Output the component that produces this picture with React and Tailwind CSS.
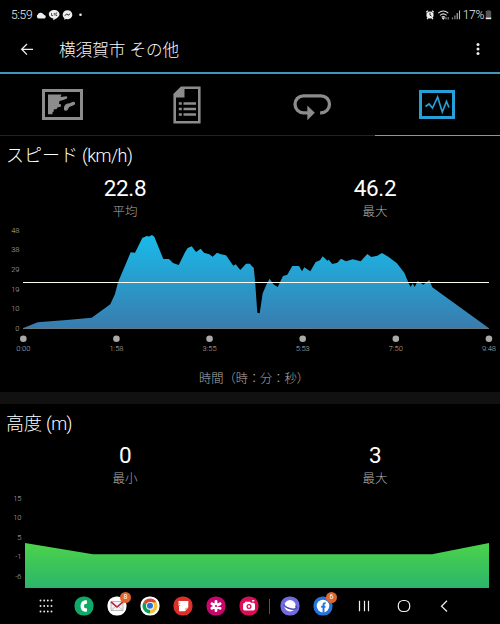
import React from 'react';

const speedPoints = [
  [23.3, 106], [37.7, 100.3], [66.7, 98], [91.7, 95.7], [110.3, 82.3], [115, 72], [118, 60.3],
  [130.7, 30.3], [135, 30.7], [142.3, 16], [146.7, 14], [149, 14.5], [152, 13], [154.3, 14.7],
  [163.3, 37], [169, 37], [173, 41], [178.7, 43], [185, 30.3], [187.7, 26], [191.7, 24.3],
  [196, 30], [200.7, 26.7], [204, 30.7], [209.3, 32.3], [212.7, 34.7], [217, 30.7], [221, 32.3],
  [226, 33.3], [233.3, 43.7], [235.7, 42.3], [240.3, 48], [246, 41.7], [250, 41.7], [251.7, 44],
  [253.7, 45.7], [255, 58], [257.3, 90.7], [259.7, 91.3], [262.7, 71.3], [266.7, 62],
  [269.7, 56.7], [273.3, 62.3], [277.7, 65], [283, 54], [287.3, 52.7], [292.3, 44], [299, 44],
  [302, 49.3], [304.3, 45.3], [310.3, 49.3], [315.7, 40], [320, 38.3], [322.7, 34.3],
  [327.3, 38.7], [328.7, 37.7], [332.3, 42], [337.3, 40.7], [341, 36.7], [346, 39.3],
  [352.7, 37.3], [360.7, 39.3], [367.3, 32], [371.3, 35], [377.3, 33.7], [382, 31],
  [388.3, 34.7], [396.7, 41], [404.3, 50.7], [408.7, 61.3], [410.7, 65], [412.7, 61.3],
  [414.7, 65], [417.7, 59], [423.3, 62.7], [429.3, 58], [432.3, 65.3], [488.7, 106],
];

const timeTicks = ['0:00', '1:58', '3:55', '5:53', '7:50', '9:48'];
const speedTicks = ['48', '38', '29', '19', '10', '0'];
const altitudeTicks = ['15', '10', '5', '-1', '-6'];

const StatusBar = () => (
  <div className="flex h-[30px] items-center justify-between pl-[11px] pr-[8px] text-[12px] font-light leading-none text-[#f0f0f0]">
    <div className="flex items-center">
      <span className="w-[25px] tracking-[-0.3px]">5:59</span>
      <svg className="h-3 w-[50px]" viewBox="0 0 50 12">
        <path d="M3 9.5a2.2 2.2 0 0 1-1.2-4A3.2 3.2 0 0 1 7 4.8l1.3 1.1A1.9 1.9 0 0 1 8.6 9.5z" fill="#eee" />
        <path d="M18.2 1c-3 0-5.4 1.9-5.4 4.3 0 2.2 2 3.9 4.5 4.2v1.7c2.5-1.2 6.2-3.4 6.2-5.9C23.5 2.9 21.2 1 18.2 1z" fill="#eee" />
        <path d="M15.5 4v2.5h1.5M18.3 4v2.5M21.2 4h-1.3v2.5h1.3" stroke="#333" strokeWidth=".8" fill="none" />
        <path d="M31.5 1.2c-2.8 0-4.8 2-4.8 4.5 0 1.4.6 2.6 1.6 3.4v1.7l1.7-.8c3.4.8 6.3-1.4 6.3-4.3 0-2.5-2-4.5-4.800-4.500z" fill="#eee" />
        <path d="m28.8 6.8 1.9-1.9 1.5 1.3 2-1.5" stroke="#222" strokeWidth="1" fill="none" />
        <circle cx="44.5" cy="5.7" r="1.3" fill="#eee" />
      </svg>
    </div>
    <div className="flex items-center">
      <svg className="mr-[2px] h-3 w-[36px]" viewBox="0 0 36 12">
        <circle cx="5" cy="6" r="3.6" fill="#eee" />
        <path d="M1.3 3.200 3 1.600M8.700 3.200 7 1.600M2 10.200l1.200-1.200M8 10.200 6.800 9" stroke="#eee" strokeWidth="1.2" />
        <path d="M5 3.7v2.5l1.5.8" stroke="#111" strokeWidth=".9" fill="none" />
        <g stroke="#ddd" strokeWidth="1.1" fill="none">
          <path d="M13.3 4.2c3-2.700 7-2.700 10 0M15 6.300c2-1.700 4.600-1.700 6.600 0M16.700 8.200c1-.8 2.200-.8 3.200 0" />
        </g>
        <path d="m18.3 10.500-1.200-1.600h2.400zM21 10.500V8M23.200 8v2.500" stroke="#ddd" strokeWidth=".7" fill="#ddd" />
        <path d="M27.5 10.3V8.5M29.9 10.3V6.5" stroke="#999" strokeWidth="1.1" />
        <path d="M32.2 10.3V4M34.5 10.3V1.5" stroke="#bbb" strokeWidth="1.1" />
      </svg>
      <span className="tracking-[-0.3px]">17%</span>
      <svg className="ml-px h-3 w-[7px]" viewBox="0 0 7 12">
        <path d="M2.2 1.3h2.600v.8h1.400v7.600H.8V2.100h1.400z" fill="#555" />
        <path d="M.8 8.600h5.400v1.600H.8z" fill="#eee" />
      </svg>
    </div>
  </div>
);

const Header = () => (
  <header className="flex h-[44px] items-center border-b-2 border-[#4295bb] pl-[20px] pr-[19px]">
    <svg className="mt-[-5px] h-[14px] w-[14px]" viewBox="0 0 14 14" fill="none" stroke="#eee" strokeWidth="1.3">
      <path d="M13 7.300H1.800M7 2 1.700 7.300 7 12.600" />
    </svg>
    <h1 className="ml-[25px] flex-1 whitespace-nowrap text-[16.6px] font-light leading-none text-[#fafafa]">横須賀市 その他</h1>
    <svg className="mt-[-4px] h-[14px] w-[6px]" viewBox="0 0 6 14" fill="#eee">
      <circle cx="3" cy="2.5" r="1.5" />
      <circle cx="3" cy="7" r="1.5" />
      <circle cx="3" cy="11.5" r="1.5" />
    </svg>
  </header>
);

const Tabs = () => (
  <nav className="grid h-[62px] grid-cols-4">
    <div className="flex items-center justify-center border-b border-[#242424]">
      <svg className="h-[31px] w-[41px]" viewBox="0 0 41 31">
        <path d="M1.5 1.5h38v28h-38z" fill="none" stroke="#8c8c8c" strokeWidth="3" />
        <path d="M6 5.500h13.500l-1 2.500 6-.7c1 .3 1 2.200 0 2.500l-4 1.500-3 .8-.5 2.700 2 .8v2l-3.500 1-1 1.600h-2.500l-.5 2.600-1 .5v2H6z" fill="#8c8c8c" />
        <path d="M22 18c1.300-3 2.500-3.300 5.500-3.700l3.500-1.500c2-.3 3 2 1.200 3.200l-5 2-1.700 3c-1 1.300-3.200.9-3.500-.5z" fill="#8c8c8c" />
      </svg>
    </div>
    <div className="flex items-center justify-center border-b border-[#242424] pr-px">
      <svg className="h-[38px] w-[28px]" viewBox="0 0 28 38">
        <path d="M8.5 1.700h17.800v34.600H1.700V8.500z" fill="none" stroke="#8c8c8c" strokeWidth="2.6" />
        <path d="M8 1h3.500v10.500H1V8z" fill="#8c8c8c" />
        <path d="M10.5 17.500H23M10.500 23H23M10.500 28.500H23" stroke="#8c8c8c" strokeWidth="2.5" />
        <path d="M5.8 17.500h3M5.800 23h3M5.800 28.500h3" stroke="#8c8c8c" strokeWidth="2.5" />
      </svg>
    </div>
    <div className="flex items-center justify-center border-b border-[#242424] pr-px">
      <svg className="mt-[5px] h-[28px] w-[40px]" viewBox="0 0 40 28">
        <path d="M16 19.800H11.500A8.500 8.500 0 0 1 11.500 2.800H29a8.500 8.500 0 0 1 0 17h-.9" fill="none" stroke="#8c8c8c" strokeWidth="3.3" />
        <path d="m15.300 12.500 7.500 7.300-7.500 7.400z" fill="#8c8c8c" />
      </svg>
    </div>
    <div className="flex items-center justify-center border-b border-[#7896d2] pr-[2px]">
      <svg className="h-[29px] w-[36px]" viewBox="0 0 36 29">
        <path d="M1.500 1.500h33v26h-33z" fill="none" stroke="#25a0d8" strokeWidth="3" />
        <path d="m6.500 16.500 3.500-2.500 3.500 4L18.600 7l4.700 15 4.200-10.500 2.500 6" fill="none" stroke="#25a0d8" strokeWidth="1.700" />
      </svg>
    </div>
  </nav>
);

const Stat = ({ value, label }) => (
  <div className="flex flex-col items-center">
    <span className="text-[22.5px] leading-[26px] tracking-[-0.4px] text-white">{value}</span>
    <span className="mt-px text-[12.5px] font-light leading-[20px] text-[#acacac]">{label}</span>
  </div>
);

const SpeedChart = () => {
  const points = speedPoints.map((p) => p.join(',')).join(' ');

  return (
    <svg className="block h-[140px] w-[500px] font-light" viewBox="0 0 500 140" fontSize="7.5">
      <defs>
        <linearGradient id="speedFill" gradientUnits="userSpaceOnUse" x1="0" y1="13" x2="0" y2="106">
          <stop offset="0%" stopColor="#18bbea" />
          <stop offset="100%" stopColor="#397cae" />
        </linearGradient>
      </defs>
      {speedTicks.map((tick, i) => (
        <text key={tick} x="19.5" y={10.7 + i * 19.65} textAnchor="end" fill="#b8b8b8">{tick}</text>
      ))}
      <polygon points={points} fill="url(#speedFill)" />
      <rect x="23" y="106" width="466" height="1" fill="#69777f" />
      <rect x="23" y="60" width="466" height="1" fill="#fffff0" />
      {timeTicks.map((tick, i) => (
        <g key={tick}>
          <circle cx={23.3 + i * 93.13} cy="116.7" r="3.3" fill="#a9a9a9" />
          <text x={23.3 + i * 93.13} y="129" textAnchor="middle" fill="#b8b8b8">{tick}</text>
        </g>
      ))}
    </svg>
  );
};

const AltitudeChart = () => (
  <svg className="block h-[98px] w-[500px] font-light" viewBox="0 0 500 98" fontSize="7.5">
    <defs>
      <linearGradient id="altitudeFill" gradientUnits="userSpaceOnUse" x1="0" y1="53" x2="0" y2="98">
        <stop offset="0%" stopColor="#4cd34a" />
        <stop offset="100%" stopColor="#2bb56b" />
      </linearGradient>
    </defs>
    {altitudeTicks.map((tick, i) => (
      <text key={tick} x="21.5" y={10.5 + i * 19.65} textAnchor="end" fill="#b8b8b8">{tick}</text>
    ))}
    <polygon points="25,53 93,64.3 432,64.3 489,53 489,98 25,98" fill="url(#altitudeFill)" />
  </svg>
);

const Badge = ({ children }) => (
  <span className="absolute -top-[4px] left-[13px] flex h-[11px] w-[11px] items-center justify-center rounded-full bg-[#e0642c] text-[7px] leading-none text-white">
    {children}
  </span>
);

const AppIcon = ({ children, badge }) => (
  <div className="relative h-5 w-5">
    <svg className="block h-5 w-5" viewBox="0 0 20 20">{children}</svg>
    {badge && <Badge>{badge}</Badge>}
  </div>
);

const NavBar = () => (
  <footer className="flex h-[36px] items-center pl-[36px]">
    <svg className="mr-[18px] h-5 w-5" viewBox="0 0 20 20" fill="#e8e8e8">
      {[4.5, 10, 15.5].map((y) =>
        [4.5, 8.2, 11.8, 15.5].map((x) => <circle key={`${x}-${y}`} cx={x} cy={y} r=".95" />)
      )}
    </svg>
    <div className="flex gap-[13px]">
      <AppIcon>
        <rect x=".5" y=".5" width="19" height="19" rx="8.8" fill="#0fa968" />
        <path d="M12.8 4.200c-4-.3-6.200 2-6.200 5.900s2.200 6 6.200 5.700l.3-3.300-2.600-.6c-.6-1.200-.6-2.500 0-3.700l2.600-.6z" fill="#fff" />
      </AppIcon>
      <AppIcon badge="8">
        <rect x=".5" y=".5" width="19" height="19" rx="8.8" fill="#fff" />
        <path d="M4 5.500h12v9H4z" fill="#f4f1f1" stroke="#aaa" strokeWidth=".8" />
        <path d="m4 14.500 4.500-4M16 14.500l-4.500-4" stroke="#aaa" strokeWidth=".7" />
        <path d="m4 5.800 6 5.200 6-5.200" fill="none" stroke="#b8213d" strokeWidth="1.6" />
      </AppIcon>
      <AppIcon>
        <rect x=".5" y=".5" width="19" height="19" rx="8.8" fill="#fff" />
        <path d="M10 10 3.500 6.300A7.500 7.500 0 0 1 16.500 6.300z" fill="#db4437" />
        <path d="M10 10 3.500 6.300A7.500 7.500 0 0 0 10 17.500z" fill="#109d58" />
        <path d="M10 10V17.500A7.500 7.500 0 0 0 16.500 6.300H10z" fill="#f6c338" />
        <circle cx="10" cy="9.8" r="3.9" fill="#fff" />
        <circle cx="10" cy="9.8" r="3" fill="#2a6fd8" />
      </AppIcon>
      <AppIcon>
        <rect x=".5" y=".5" width="19" height="19" rx="8.8" fill="#dc3029" />
        <path d="M5.500 5h9.800v6.200L12 15.200H6V10h-.5z" fill="#fff" />
        <path d="M15.300 11.200 12 15.200v-3z" fill="#f3b5ae" />
        <path d="M5.500 7.200h1.800M5.500 9.500h1.800" stroke="#dc3029" strokeWidth=".6" />
      </AppIcon>
      <AppIcon>
        <rect x=".5" y=".5" width="19" height="19" rx="8.8" fill="#c9066c" />
        <g stroke="#fff" strokeWidth="2.8" strokeLinecap="round">
          <path d="M10 5.300v9.400M5.900 7.700l8.200 4.600M14.100 7.700l-8.200 4.600" />
        </g>
        <circle cx="10" cy="10" r="1.1" fill="#c9066c" />
      </AppIcon>
      <AppIcon>
        <rect x=".5" y=".5" width="19" height="19" rx="8.8" fill="#dc0d58" />
        <path d="M6 5.700h5l.8 1h2.500q1.700 0 1.700 1.700v4.400q0 1.700-1.700 1.700H5.700Q4 14.500 4 12.800V8.400q0-1.700 2-1.700z" fill="#fff" />
        <circle cx="10" cy="10.5" r="2.500" fill="#dc0d58" />
        <circle cx="10" cy="10.5" r="1.2" fill="#fff" />
        <path d="M13 4.800h2.400" stroke="#fff" strokeWidth="1.3" />
      </AppIcon>
    </div>
    <div className="mx-[10px] h-[15px] w-px bg-[#555]" />
    <div className="flex gap-[13px]">
      <AppIcon>
        <rect x=".5" y=".5" width="19" height="19" rx="8.8" fill="#716be0" />
        <circle cx="10" cy="9.8" r="5.7" fill="#fff" />
        <path d="M4.300 8.200C2.800 11 13.500 14.800 16.300 12.300c.7-.7.200-1.700-.8-2.500" fill="none" stroke="#5149b4" strokeWidth="1.4" />
      </AppIcon>
      <AppIcon badge="6">
        <rect x=".5" y=".5" width="19" height="19" rx="8.8" fill="#2374dc" />
        <circle cx="10" cy="10" r="6.3" fill="#fff" />
        <path d="M10.500 16.300V8.700q0-1.800 2.200-1.600M8.200 10.700h4.200" fill="none" stroke="#2374dc" strokeWidth="1.9" />
      </AppIcon>
    </div>
    <div className="ml-[21px] flex gap-5 text-[#eee]">
      <svg className="h-5 w-5" viewBox="0 0 20 20" stroke="currentColor" strokeWidth="1.2">
        <path d="M5.500 4.800v10.400M10.500 4.800v10.400M14.500 4.800v10.400" />
      </svg>
      <svg className="h-5 w-5" viewBox="0 0 20 20" fill="none" stroke="currentColor" strokeWidth="1.2">
        <rect x="4.300" y="4.500" width="11.400" height="11" rx="4.800" />
      </svg>
      <svg className="h-5 w-5" viewBox="0 0 20 20" fill="none" stroke="currentColor" strokeWidth="1.2">
        <path d="M13 4.800 7.500 10.200l5.500 5.300" />
      </svg>
    </div>
  </footer>
);

export default function App() {
  return (
    <div className="flex h-[624px] w-[500px] flex-col overflow-hidden bg-black font-[Roboto,'Noto_Sans_CJK_JP',sans-serif]">
      <StatusBar />
      <Header />
      <Tabs />

      <section className="h-[256px]">
        <h2 className="h-[31px] pl-[6px] pt-[8px] text-[18px] font-light leading-[24px] text-white">
          スピード<span className="tracking-[-0.5px]"> (km/h)</span>
        </h2>
        <div className="grid h-[55px] grid-cols-2 pt-[8px]">
          <Stat value="22.8" label="平均" />
          <Stat value="46.2" label="最大" />
        </div>
        <SpeedChart />
        <p className="pl-[8px] pt-[7px] text-center text-[12.3px] font-light leading-[20px] tracking-[-0.1px] text-[#acacac]">時間（時：分：秒）</p>
      </section>

      <div className="h-[12px] bg-[#111111]" />

      <section className="h-[184px]">
        <h2 className="h-[31px] pl-[6px] pt-[8px] text-[18px] font-light leading-[24px] text-white">
          高度<span className="tracking-[-0.5px]"> (m)</span>
        </h2>
        <div className="grid h-[55px] grid-cols-2 pt-[7px]">
          <Stat value="0" label="最小" />
          <Stat value="3" label="最大" />
        </div>
        <AltitudeChart />
      </section>

      <NavBar />
    </div>
  );
}
